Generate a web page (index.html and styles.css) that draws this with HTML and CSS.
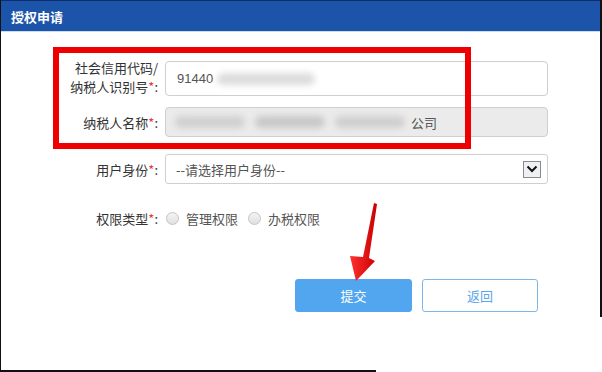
FILE: index.html
```html
<!DOCTYPE html>
<html lang="zh">
<head>
<meta charset="utf-8">
<title>授权申请</title>
<link rel="stylesheet" href="styles.css">
</head>
<body>
<div class="page">
  <div class="header">授权申请</div>
  <div class="form">
    <div class="row row1">
      <label class="label two"><span class="line">社会信用代码/</span><span class="line">纳税人识别号<span class="req">*</span>:</span></label>
      <div class="input">
        <span class="val">91440</span><span class="blur b1"></span>
      </div>
    </div>
    <div class="row row2">
      <label class="label">纳税人名称<span class="req">*</span>:</label>
      <div class="input readonly">
        <span class="blur b2"></span><span class="blur b3"></span><span class="blur b4"></span><span class="val co">公司</span>
      </div>
    </div>
    <div class="row row3">
      <label class="label">用户身份<span class="req">*</span>:</label>
      <div class="select">
        <span class="ph">--请选择用户身份--</span>
        <span class="arrowbox"><svg width="12" height="8" viewBox="0 0 12 8"><path d="M1.5 1.5 L6 6 L10.5 1.5" fill="none" stroke="#111" stroke-width="2"/></svg></span>
      </div>
    </div>
    <div class="row row4">
      <label class="label">权限类型<span class="req">*</span>:</label>
      <div class="radios">
        <span class="radio"></span><span class="rtext">管理权限</span>
        <span class="radio"></span><span class="rtext">办税权限</span>
      </div>
    </div>
    <div class="buttons">
      <button class="btn primary">提交</button>
      <button class="btn secondary">返回</button>
    </div>
  </div>
  <div class="redbox"></div>
  <svg class="pointer" width="40" height="90" viewBox="345 198 40 90">
    <defs>
      <linearGradient id="g" x1="0" y1="0" x2="1" y2="0">
        <stop offset="0" stop-color="#ff3030"/>
        <stop offset="1" stop-color="#c80000"/>
      </linearGradient>
    </defs>
    <polygon points="374,203 377,204 369,258 375,261 356,281 350,256 363,257" fill="url(#g)"/>
  </svg>
</div>
</body>
</html>
```
FILE: styles.css
```css
html, body {
  margin: 0;
  padding: 0;
  background: #fff;
}
body {
  width: 602px;
  height: 372px;
  overflow: hidden;
  font-family: "Noto Sans CJK SC", "Noto Sans", sans-serif;
  font-size: 13px;
  color: #333;
}
.page {
  position: relative;
  width: 602px;
  height: 372px;
  box-sizing: border-box;
  border-left: 1px solid #111;
}
.page::before {
  content: "";
  position: absolute;
  left: 0;
  bottom: 0;
  width: 375px;
  height: 2px;
  background: #111;
}
.page::after {
  content: "";
  position: absolute;
  left: 599px;
  top: 0;
  width: 2px;
  height: 317px;
  background: #111;
}
.header {
  height: 32px;
  line-height: 31px;
  background: #1b54a8;
  border-top: 1px solid #0e2d6a;
  box-sizing: border-box;
  border-bottom: 1px solid #c9dcf3;
  color: #fff;
  font-weight: bold;
  font-size: 13px;
  padding-left: 10px;
}
.form {
  padding-top: 29px;
}
.row {
  display: grid;
  grid-template-columns: 157px 383px;
  column-gap: 7px;
  align-items: center;
}
.row1 { height: 29px; }
.row2 { height: 30px; margin-top: 17px; }
.row3 { height: 30px; margin-top: 17px; }
.row4 { height: 30px; margin-top: 19px; }
.label {
  text-align: right;
  color: #333;
  white-space: nowrap;
}
.label.two {
  display: flex;
  flex-direction: column;
  align-items: flex-end;
  line-height: 19px;
  margin-top: -3px;
}
.line { display: block; line-height: 19px; }
.req { color: #e8383d; }
.input, .select {
  height: 100%;
  box-sizing: border-box;
  border: 1px solid #cfcfcf;
  border-radius: 4px;
  display: flex;
  align-items: center;
  padding-left: 11px;
  color: #555;
}
.input.readonly {
  background: #ebebeb;
  padding-left: 9px;
}
.val { color: #555; font-family: "Liberation Sans", "Noto Sans CJK SC", sans-serif; }
.val.co { font-family: "Noto Sans CJK SC", sans-serif; margin-left: 6px; }
.blur {
  display: inline-block;
  height: 12px;
  background: #d7d7d7;
  filter: blur(3px);
  border-radius: 6px;
}
.b1 { width: 98px; margin-left: 4px; background: #dcdcdc; }
.b2 { width: 70px; background: #d0d0d0; }
.b3 { width: 70px; margin-left: 10px; background: #c8c8c8; }
.b4 { width: 70px; margin-left: 10px; background: #cfcfcf; }
.select {
  border-radius: 3px;
  justify-content: space-between;
  padding-left: 10px;
  padding-right: 6px;
  color: #555;
}
.arrowbox {
  width: 18px;
  height: 17px;
  box-sizing: border-box;
  border: 1px solid #8a8a8a;
  background: #eef0f4;
  display: flex;
  align-items: center;
  justify-content: center;
}
.radios {
  display: flex;
  align-items: center;
  color: #555;
}
.radio {
  width: 13px;
  height: 13px;
  box-sizing: border-box;
  border: 1px solid #c4c4c4;
  border-radius: 50%;
  background: linear-gradient(#f4f4f4, #e0e0e0);
  margin-left: 1px;
  margin-right: 7px;
}
.rtext { margin-right: 9px; }
.buttons {
  display: flex;
  gap: 10px;
  padding-left: 294px;
  margin-top: 46px;
}
.btn {
  width: 117px;
  height: 33px;
  box-sizing: border-box;
  border-radius: 3px;
  font-family: "Noto Sans CJK SC", sans-serif;
  font-size: 13px;
  padding: 0;
}
.btn.primary {
  background: #52a5ef;
  border: 1px solid #52a5ef;
  color: #fff;
}
.btn.secondary {
  width: 116px;
  background: #fff;
  border: 1px solid #7db7ea;
  color: #5aa6ea;
}
.redbox {
  position: absolute;
  left: 52px;
  top: 47px;
  width: 418px;
  height: 102px;
  box-sizing: border-box;
  border: 6px solid #ee0000;
}
.pointer {
  position: absolute;
  left: 344px;
  top: 198px;
}
```
